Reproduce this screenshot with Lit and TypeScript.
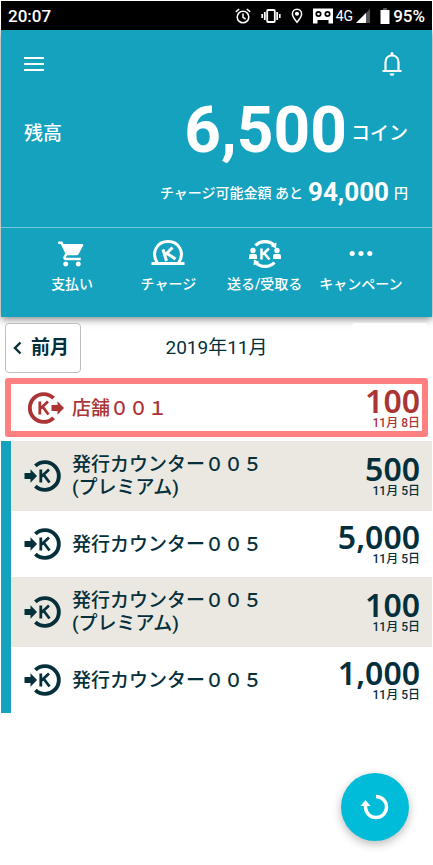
import { LitElement, html, svg, css, nothing } from "lit";
import { customElement, property } from "lit/decorators.js";
import { classMap } from "lit/directives/class-map.js";

interface Entry {
  kind: "in" | "out";
  lines: string[];
  amount: string;
  date: string;
  selected?: boolean;
}

const ENTRIES: Entry[] = [
  { kind: "out", lines: ["店舗００１"], amount: "100", date: "11月 8日", selected: true },
  { kind: "in", lines: ["発行カウンター００５", "(プレミアム)"], amount: "500", date: "11月 5日" },
  { kind: "in", lines: ["発行カウンター００５"], amount: "5,000", date: "11月 5日" },
  { kind: "in", lines: ["発行カウンター００５", "(プレミアム)"], amount: "100", date: "11月 5日" },
  { kind: "in", lines: ["発行カウンター００５"], amount: "1,000", date: "11月 5日" },
];

const alarmIcon = svg`<svg width="16" height="16" viewBox="0 0 16 16" fill="none" stroke="#fff" stroke-width="1.5" aria-hidden="true">
  <circle cx="8" cy="9" r="5.8"/><path d="M8 5.6V9.3L10.6 11"/><path d="M.8 3.8 4.2 1M15.2 3.8 11.8 1"/></svg>`;

const vibrateIcon = svg`<svg width="20" height="16" viewBox="0 0 20 16" fill="none" stroke="#fff" aria-hidden="true">
  <rect x="6.2" y="2" width="7.6" height="12" rx=".8" stroke-width="1.8"/>
  <path d="M3.8 4v8M16.2 4v8" stroke-width="1.8"/><path d="M1.2 6v4M18.8 6v4" stroke-width="1.6"/></svg>`;

const pinIcon = svg`<svg width="12" height="16" viewBox="0 0 12 16" fill="none" stroke="#fff" stroke-width="1.5" aria-hidden="true">
  <path d="M6 14.2C3.2 10.8 1.4 8.3 1.4 5.9a4.6 4.6 0 0 1 9.2 0C10.6 8.3 8.8 10.8 6 14.2Z"/><circle cx="6" cy="5.7" r="1.3" fill="#fff"/></svg>`;

const tapeIcon = svg`<svg width="20" height="16" viewBox="0 0 20 16" aria-hidden="true">
  <path d="M0 .5h20v15h-4.500v-3.500h-11v3.500H0Z" fill="#fff"/>
  <circle cx="5.5" cy="6" r="2.2" fill="#fff" stroke="#000" stroke-width="1.7"/>
  <circle cx="14.5" cy="6" r="2.2" fill="#fff" stroke="#000" stroke-width="1.7"/></svg>`;

const signalIcon = svg`<svg width="14" height="14" viewBox="0 0 14 14" aria-hidden="true">
  <path d="M0 14 14 0V14Z" fill="#555"/><path d="M0 14 10 4V14Z" fill="#fff"/></svg>`;

const batteryIcon = svg`<svg width="10" height="16" viewBox="0 0 10 16" aria-hidden="true">
  <path d="M3 0h4v2H3Z" fill="#555"/><path d="M.5 2h9v14h-9Z" fill="#fff"/></svg>`;

const bellIcon = svg`<svg width="20" height="24" viewBox="0 0 20 24" aria-hidden="true">
  <path d="M3.500 18.500V10.200C3.500 6.300 6 3.500 10 3.500s6.500 2.800 6.500 6.700v8.300" fill="none" stroke="#fff" stroke-width="2.200"/>
  <path d="M.5 18h19v2H.5ZM8.500 1.500a1.500 1.500 0 0 1 3 0V4h-3ZM7.500 21.500h5a2.500 2.200 0 0 1-5 0Z" fill="#fff"/></svg>`;

const cartIcon = svg`<svg width="30" height="30" viewBox="0 0 24 24" fill="currentColor" aria-hidden="true">
  <path d="M7 18c-1.100 0-1.990.9-1.990 2S5.900 22 7 22s2-.9 2-2-.9-2-2-2zM1 2v2h2l3.600 7.590-1.350 2.450c-.16.280-.25.610-.25.960 0 1.100.9 2 2 2h12v-2H7.420c-.140 0-.25-.110-.25-.25l.030-.120.900-1.630h7.450c.750 0 1.410-.410 1.750-1.030l3.580-6.490A1 1 0 0 0 20 4H5.210l-.940-2H1zm16 16c-1.100 0-1.990.9-1.990 2s.890 2 1.990 2 2-.9 2-2-.9-2-2-2z"/></svg>`;

const chargeIcon = svg`<svg width="34" height="28" viewBox="0 0 34 28" fill="none" stroke="currentColor" aria-hidden="true">
  <path d="M6.300 24C-.5 13 6.500 2.500 17 2.500S34.500 13 27.700 24" stroke-width="3"/>
  <path d="M.5 24.500h33" stroke-width="3"/>
  <path d="M12 10.500 15.500 22M21.500 8.500 14 16M16 14.500l8.500 5.500" stroke-width="3"/></svg>`;

const sendIcon = svg`<svg width="34" height="30" viewBox="0 0 34 30" fill="none" stroke="currentColor" aria-hidden="true">
  <path d="M7.500 6.500C12.500 1.200 21.500 1.200 26.500 6.500M26.500 23.500C21.500 28.800 12.500 28.800 7.500 23.500" stroke-width="3.200"/>
  <path d="m28.500 3.500-.5 6-5.500-2.500ZM5.500 26.500l.5-6 5.500 2.500Z" fill="currentColor" stroke="none"/>
  <path d="M13.500 9.500v11M21 9.500l-6.500 6M16 14l5.500 6.500" stroke-width="2.500"/>
  <g fill="currentColor" stroke="none"><circle cx="5" cy="11.500" r="2.700"/><path d="M1 20v-3q0-2 2-2h4q2 0 2 2v3Z"/>
  <circle cx="29" cy="11.500" r="2.700"/><path d="M25 20v-3q0-2 2-2h4q2 0 2 2v3Z"/></g></svg>`;

const dotsIcon = svg`<svg width="24" height="28" viewBox="0 0 24 28" fill="currentColor" aria-hidden="true">
  <circle cx="3.200" cy="14.500" r="2.600"/><circle cx="12" cy="14.500" r="2.600"/><circle cx="20.800" cy="14.500" r="2.600"/></svg>`;

const inIcon = svg`<svg width="38" height="32" viewBox="0 0 38 32" aria-hidden="true">
  <path d="M11.400 5.900A13.900 13.900 0 1 1 11.400 26.100" fill="none" stroke="currentColor" stroke-width="3.900"/>
  <path d="M.5 13H6.500V9.300L13 16 6.500 22.700V19H.5Z" fill="currentColor"/>
  <path d="M16.800 9.500v13M25 9.500l-7.500 7M19.500 14.500l6 8" fill="none" stroke="currentColor" stroke-width="2.800"/></svg>`;

const outIcon = svg`<svg width="38" height="32" viewBox="0 0 38 32" aria-hidden="true">
  <path d="M25.600 6.200A13.900 13.900 0 1 0 25.600 25.800" fill="none" stroke="currentColor" stroke-width="3.900"/>
  <path d="M23.500 13h6V9.300L36 16l-6.500 6.700V19h-6Z" fill="currentColor"/>
  <path d="M11.800 9.500v13M20 9.500l-7.500 7M14.500 14.500l6 8" fill="none" stroke="currentColor" stroke-width="2.800"/></svg>`;

const ACTIONS = [
  { icon: cartIcon, label: "支払い" },
  { icon: chargeIcon, label: "チャージ" },
  { icon: sendIcon, label: "送る/受取る" },
  { icon: dotsIcon, label: "キャンペーン" },
];

const base = css`
  * { box-sizing: border-box; }
  svg { display: block; flex: none; }
  button {
    margin: 0;
    padding: 0;
    border: 0;
    background: none;
    font: inherit;
    color: inherit;
    cursor: pointer;
  }
`;

@customElement("status-bar")
export class StatusBar extends LitElement {
  static styles = [base, css`
    :host {
      display: flex;
      align-items: center;
      height: 29px;
      padding: 0 7px;
      background: #000;
      color: #fff;
      font-size: 17px;
      font-weight: 500;
    }
    .time { flex: 1; }
    .icons { display: flex; align-items: center; gap: 10px; }
    .group { display: flex; align-items: center; gap: 3px; }
    .network { font-size: 14px; font-weight: 400; }
  `];

  render() {
    return html`
      <span class="time">20:07</span>
      <div class="icons">
        ${alarmIcon}${vibrateIcon}${pinIcon}
        <div class="group">${tapeIcon}<span class="network">4G</span>${signalIcon}</div>
        <div class="group">${batteryIcon}<span>95%</span></div>
      </div>`;
  }
}

@customElement("balance-header")
export class BalanceHeader extends LitElement {
  static styles = [base, css`
    :host {
      display: block;
      background: #15a2bf;
      color: #fff;
      box-shadow: 0 2px 8px rgba(0, 0, 0, 0.5);
    }
    .bar {
      display: flex;
      justify-content: space-between;
      align-items: center;
      height: 68px;
      padding: 0 30px 0 23px;
    }
    .menu { display: grid; gap: 4px; width: 20px; }
    .menu i { height: 2px; background: #fff; }
    .balance {
      display: flex;
      align-items: center;
      height: 66px;
      padding: 0 24px 0 23px;
      font-size: 19px;
      font-weight: 500;
    }
    .name { flex: 1; }
    .coins { font-size: 64px; font-weight: 700; line-height: 66px; margin-right: 4px; }
    .limit {
      display: flex;
      justify-content: flex-end;
      align-items: center;
      gap: 5px;
      height: 63px;
      padding: 0 24px 8px;
      font-size: 14px;
      font-weight: 500;
    }
    .rest { font-size: 26px; font-weight: 700; }
    .actions {
      display: grid;
      grid-template-columns: repeat(4, 1fr);
      height: 90px;
      padding: 11px 23px 0;
      border-top: 1px solid #73c7d8;
    }
    .action {
      display: flex;
      flex-direction: column;
      align-items: center;
      gap: 7px;
      font-size: 14px;
      font-weight: 500;
      line-height: 20px;
      white-space: nowrap;
    }
    .glyph { display: grid; place-items: center; height: 28px; }
  `];

  render() {
    return html`
      <div class="bar">
        <button class="menu" aria-label="メニュー"><i></i><i></i><i></i></button>
        <button aria-label="お知らせ">${bellIcon}</button>
      </div>
      <div class="balance">
        <span class="name">残高</span><span class="coins">6,500</span><span>コイン</span>
      </div>
      <div class="limit">
        <span>チャージ可能金額 あと</span><span class="rest">94,000</span><span>円</span>
      </div>
      <nav class="actions">
        ${ACTIONS.map((a) => html`
          <button class="action"><span class="glyph">${a.icon}</span><span>${a.label}</span></button>`)}
      </nav>`;
  }
}

@customElement("history-row")
export class HistoryRow extends LitElement {
  @property({ attribute: false }) entry!: Entry;

  static styles = [base, css`
    :host { display: block; }
    .row {
      position: relative;
      display: flex;
      align-items: center;
      gap: 10px;
      min-height: 66px;
      padding: 0 12px 0 13px;
      border-left: 10px solid #15a2bf;
      color: #05303b;
    }
    .tall { min-height: 70px; }
    .out { padding-left: 17px; gap: 6px; border-color: transparent; color: #ab3434; }
    .name { flex: 1; font-size: 19px; font-weight: 500; line-height: 23px; }
    .line { display: block; }
    .value { text-align: right; font-weight: 500; }
    .amount {
      display: block;
      font-family: "Noto Sans", sans-serif;
      font-size: 32px;
      font-weight: 600;
      line-height: 31px;
    }
    .date { display: block; font-size: 12px; line-height: 15px; }
    .mark {
      position: absolute;
      inset: 3px 4px 4px -6px;
      border: 6px solid #ff8080;
      border-radius: 3px;
      pointer-events: none;
    }
  `];

  render() {
    const e = this.entry;
    return html`
      <div class=${classMap({ row: true, out: e.kind === "out", tall: e.lines.length > 1 })}>
        ${e.kind === "out" ? outIcon : inIcon}
        <span class="name">${e.lines.map((l) => html`<span class="line">${l}</span>`)}</span>
        <span class="value"><span class="amount">${e.amount}</span><span class="date">${e.date}</span></span>
        ${e.selected ? html`<span class="mark"></span>` : nothing}
      </div>`;
  }
}

@customElement("app-root")
export class AppRoot extends LitElement {
  static styles = [base, css`
    :host {
      display: block;
      position: relative;
      min-height: 100vh;
      box-sizing: border-box;
      padding: 1px 1px 0;
      background: #fff;
      color: #05303b;
      font-family: Roboto, "Noto Sans CJK JP", sans-serif;
    }
    .month {
      position: relative;
      display: grid;
      grid-template-columns: 76px 1fr 76px;
      align-items: center;
      padding: 6px 4px 2px;
      font-size: 19px;
      line-height: 24px;
      text-align: center;
    }
    .month h1 { margin: 0; font: inherit; }
    .prev, .next { height: 50px; border-radius: 4px; background: #fff; }
    .prev {
      display: flex;
      align-items: center;
      gap: 9px;
      padding-left: 7px;
      border: 1px solid #bdbdbd;
      font-weight: 700;
    }
    .list { margin: 0; padding: 0; list-style: none; }
    .list li:nth-child(even) { background: #ebe8e1; }
    .reload {
      position: absolute;
      right: 24px;
      bottom: 24px;
      display: grid;
      place-items: center;
      width: 68px;
      height: 68px;
      border-radius: 50%;
      background: #00bcd8;
      box-shadow: 0 3px 10px rgba(0, 0, 0, 0.28);
    }
  `];

  render() {
    return html`
      <status-bar></status-bar>
      <balance-header></balance-header>
      <div class="month">
        <button class="prev">
          <svg width="9" height="14" viewBox="0 0 9 14" fill="none" stroke="currentColor" stroke-width="2.4" aria-hidden="true"><path d="M7.500 1.500 2 7l5.500 5.500"/></svg>
          <span>前月</span>
        </button>
        <h1>2019年11月</h1>
        <div class="next"></div>
      </div>
      <ul class="list">
        ${ENTRIES.map((e) => html`<li><history-row .entry=${e}></history-row></li>`)}
      </ul>
      <button class="reload" aria-label="更新">
        <svg width="30" height="28" viewBox="0 0 30 28" aria-hidden="true">
          <path d="M16 3.500A10.500 10.500 0 1 1 5.500 14V11" fill="none" stroke="#fff" stroke-width="3.400"/>
          <path d="M.500 13 5.500 7l5 6Z" fill="#fff"/></svg>
      </button>`;
  }
}
